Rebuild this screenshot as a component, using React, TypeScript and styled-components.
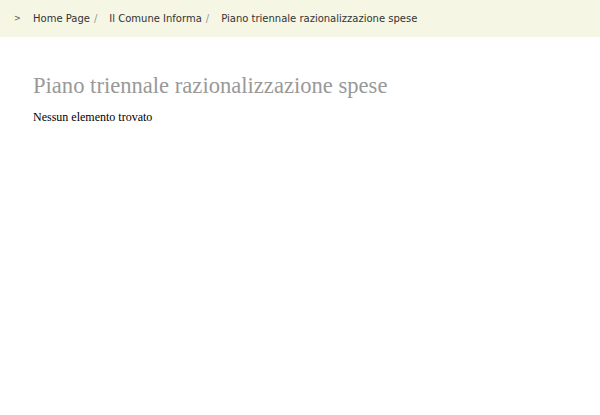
import React from "react";
import styled, { createGlobalStyle } from "styled-components";

const Global = createGlobalStyle`
  html, body { margin: 0; padding: 0; background: #ffffff; }
  body { font-family: "Liberation Serif", serif; }
`;

const Page = styled.div`
  width: 600px;
  min-height: 415px;
  background: #ffffff;
`;

const Breadcrumb = styled.nav`
  height: 37px;
  background: #f5f6e3;
  display: flex;
  align-items: center;
  padding: 0 0 0 14px;
  box-sizing: border-box;
  font-family: "DejaVu Sans", sans-serif;
  font-size: 10px;
  color: #333333;
`;

const Marker = styled.span`
  font-size: 8px;
  color: #555555;
  width: 7px;
`;

const Crumb = styled.span`
  margin-left: 12px;
  white-space: nowrap;
`;

const Sep = styled.span`
  color: #999999;
  margin-left: 4px;
`;

const Content = styled.main`
  padding: 36px 0 0 33px;
`;

const Title = styled.h1`
  margin: 0;
  font-family: "Liberation Serif", serif;
  font-weight: normal;
  font-size: 22.6px;
  line-height: 26px;
  color: #999999;
`;

const Empty = styled.p`
  margin: 11px 0 0;
  font-family: "Liberation Serif", serif;
  font-size: 12px;
  line-height: 15px;
  color: #000000;
`;

export default function App() {
  return (
    <Page>
      <Global />
      <Breadcrumb>
        <Marker>&gt;</Marker>
        <Crumb>Home Page<Sep>/</Sep></Crumb>
        <Crumb>Il Comune Informa<Sep>/</Sep></Crumb>
        <Crumb>Piano triennale razionalizzazione spese</Crumb>
      </Breadcrumb>
      <Content>
        <Title>Piano triennale razionalizzazione spese</Title>
        <Empty>Nessun elemento trovato</Empty>
      </Content>
    </Page>
  );
}
